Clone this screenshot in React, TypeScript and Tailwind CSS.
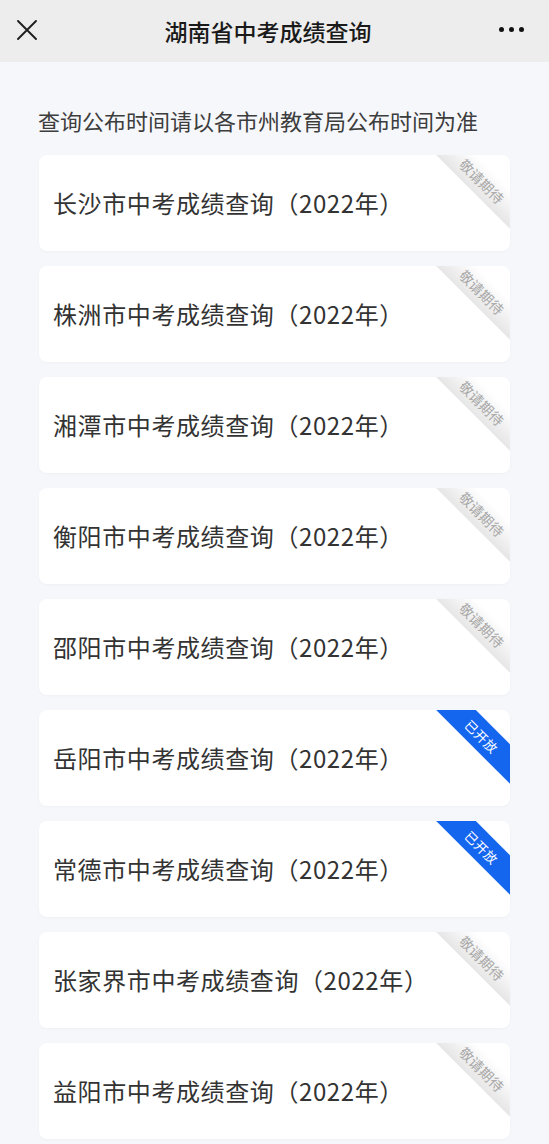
import React from "react";

const cities: { name: string; open: boolean }[] = [
  { name: "长沙市", open: false },
  { name: "株洲市", open: false },
  { name: "湘潭市", open: false },
  { name: "衡阳市", open: false },
  { name: "邵阳市", open: false },
  { name: "岳阳市", open: true },
  { name: "常德市", open: true },
  { name: "张家界市", open: false },
  { name: "益阳市", open: false },
];

function Card({ name, open }: { name: string; open: boolean }) {
  return (
    <div className="relative h-[96px] overflow-hidden rounded-[8px] bg-white shadow-[0_1px_3px_rgba(0,0,0,0.03)] flex items-center pl-[14px]">
      <span className="text-[24px] leading-none text-[#333] tracking-[0.6px]">
        {name}中考成绩查询（2022年）
      </span>
      {open ? (
        <div className="absolute top-[12px] right-[-27px] w-[110px] h-[28px] rotate-45 bg-[#1466ef] flex items-center justify-center">
          <span className="text-[13px] leading-none text-white tracking-[0.5px]">已开放</span>
        </div>
      ) : (
        <div className="absolute top-[12px] right-[-27px] w-[110px] h-[28px] rotate-45 bg-linear-to-b from-white to-[#e6e6e6] flex items-center justify-center">
          <span className="text-[14px] leading-none text-[#a8a8a8]">敬请期待</span>
        </div>
      )}
    </div>
  );
}

export default function App() {
  return (
    <div
      className="w-[549px] min-h-[1144px] bg-[#f6f7fb]"
      style={{ fontFamily: '"Noto Sans CJK SC", "Noto Sans", sans-serif' }}
    >
      <header className="h-[62px] bg-[#ededed] flex items-center justify-between px-[17px]">
        <svg width="20" height="20" viewBox="0 0 20 20" className="mt-[-2px]">
          <path d="M1 1 L19 19 M19 1 L1 19" stroke="#1f1f1f" strokeWidth="1.9" strokeLinecap="round" />
        </svg>
        <h1 className="text-[23px] font-medium text-[#1a1a1a] leading-none">
          湖南省中考成绩查询
        </h1>
        <div className="flex items-center gap-[5px] mr-[8px] mt-[-4px]">
          <span className="block w-[5px] h-[5px] rounded-full bg-[#111]" />
          <span className="block w-[5px] h-[5px] rounded-full bg-[#111]" />
          <span className="block w-[5px] h-[5px] rounded-full bg-[#111]" />
        </div>
      </header>
      <main className="px-[39px]">
        <p className="pt-[42px] pb-[19px] text-[22px] leading-[32px] text-[#3d3d3d] ml-[-1px]">
          查询公布时间请以各市州教育局公布时间为准
        </p>
        <div className="flex flex-col gap-[15px]">
          {cities.map((c) => (
            <Card key={c.name} name={c.name} open={c.open} />
          ))}
        </div>
      </main>
    </div>
  );
}
